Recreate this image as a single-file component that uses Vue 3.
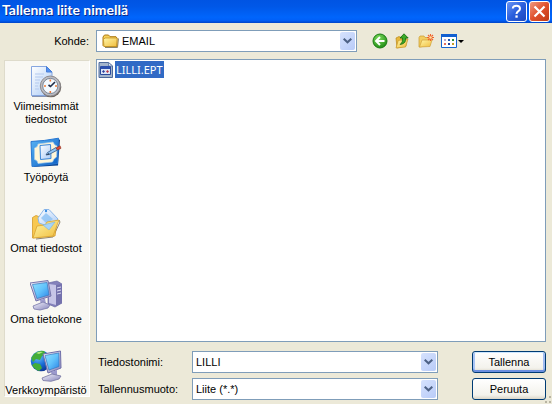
<script setup>
import { ref } from 'vue'

const folder = ref('EMAIL')
const fileName = ref('LILLI')
const fileType = ref('Liite (*.*)')
const places = [
  { id: 'recent', label: 'Viimeisimmät tiedostot' },
  { id: 'desktop', label: 'Työpöytä' },
  { id: 'documents', label: 'Omat tiedostot' },
  { id: 'computer', label: 'Oma tietokone' },
  { id: 'network', label: 'Verkkoympäristö' },
]
</script>

<template>
  <main class="dialog">
    <svg class="defs" width="0" height="0" aria-hidden="true">
      <defs>
        <linearGradient id="screen" x1="0" y1="0" x2="1" y2="1">
          <stop offset="0" stop-color="#8fe0ff" /><stop offset="0.5" stop-color="#62c3fb" /><stop offset="1" stop-color="#2c86e8" />
        </linearGradient>
        <linearGradient id="metal" x1="0" y1="0" x2="1" y2="1">
          <stop offset="0" stop-color="#f4f4fc" /><stop offset="1" stop-color="#8583bb" />
        </linearGradient>
        <linearGradient id="yellow" x1="0" y1="0" x2="1" y2="1">
          <stop offset="0" stop-color="#fff6a8" /><stop offset="1" stop-color="#f0bd3c" />
        </linearGradient>
        <linearGradient id="blue" x1="0" y1="0" x2="1" y2="1">
          <stop offset="0" stop-color="#5ab4f4" /><stop offset="1" stop-color="#0b5fc4" />
        </linearGradient>
        <linearGradient id="paper" x1="0" y1="0" x2="1" y2="1">
          <stop offset="0" stop-color="#ffffff" /><stop offset="1" stop-color="#a9caf6" />
        </linearGradient>
        <radialGradient id="globe" cx="0.35" cy="0.3" r="0.8">
          <stop offset="0" stop-color="#6cc4fa" /><stop offset="0.5" stop-color="#1a6ed8" /><stop offset="1" stop-color="#0a2c88" />
        </radialGradient>
        <radialGradient id="green" cx="0.4" cy="0.3" r="0.75">
          <stop offset="0" stop-color="#7fdc5c" /><stop offset="1" stop-color="#1c8a12" />
        </radialGradient>
      </defs>
    </svg>

    <header class="title-bar">
      <h1>Tallenna liite nimellä</h1>
      <button class="caption help" aria-label="Ohje">
        <svg width="19" height="19" viewBox="0 0 19 19"><path d="M5.8 6.6C5.8 2.7 13 2.7 13 6.7C13 9.2 9.5 9 9.5 12" fill="none" stroke="#fff" stroke-width="2" /><path d="M8.4 13.4h2.3v2.3H8.4z" fill="#fff" /></svg>
      </button>
      <button class="caption close" aria-label="Sulje">
        <svg width="19" height="19" viewBox="0 0 19 19"><path d="M4.5 4.5L14.5 14.5M14.5 4.5L4.5 14.5" stroke="#fff" stroke-width="2.2" /></svg>
      </button>
    </header>

    <div class="toolbar">
      <label class="look-label" for="folder">Kohde:</label>
      <div class="combo look">
        <svg class="folder-icon" width="17" height="16" viewBox="0 0 17 16"><path d="M3 14.5h12.5l1-9" fill="none" stroke="#8a846c" /><path d="M1 12.5V4L2.5 2h4L8 3.7h6l1 1.5v8.3H2z" fill="#f4cf58" stroke="#ad7b16" /><path d="M1.5 6.5L3 5h12.2l-.7 8.5H2z" fill="url(#yellow)" stroke="#c08c1c" stroke-width=".7" /></svg>
        <select id="folder" v-model="folder" class="with-icon"><option>EMAIL</option></select>
        <span class="arrow"><svg width="9" height="6" viewBox="0 0 9 6"><path d="M.7 .7L4.5 4.3L8.3 .7" fill="none" stroke="#4d6185" stroke-width="2" /></svg></span>
      </div>
      <nav class="tools">
        <button aria-label="Takaisin"><svg width="16" height="16" viewBox="0 0 16 16"><circle cx="8" cy="8" r="7" fill="url(#green)" stroke="#197c13" /><path d="M12.5 8H4.5M8 4L4 8L8 12" fill="none" stroke="#fff" stroke-width="1.9" /></svg></button>
        <button aria-label="Ylös"><svg width="16" height="16" viewBox="0 0 16 16"><path d="M1 5l3-1.5 2 1 5-1V13L2 15z" fill="#e8b83a" stroke="#b98818" stroke-width=".7" /><path d="M1 15L3.3 7.4L13 6L10.5 14z" fill="url(#yellow)" stroke="#c89625" stroke-width=".7" /><path d="M5.2 11.5Q8.2 9.5 7.5 5H5L9 .8L13.2 5H10.7Q11.4 10.5 5.2 11.5z" fill="#3aab28" stroke="#14680d" stroke-width=".8" /></svg></button>
        <button aria-label="Uusi kansio"><svg width="16" height="16" viewBox="0 0 16 16"><path d="M1 4.5L2 3h4l1 1.5h5V12L2 14H1z" fill="#f2cd60" stroke="#c99b30" stroke-width=".7" /><path d="M1.5 14L4 7h10l-2 6.5z" fill="url(#yellow)" stroke="#d1a239" stroke-width=".7" /><path d="M12.5 1V8M9 4.5H16M10 2L15 7M15 2L10 7" stroke="#ef632e" stroke-width="1.1" /><circle cx="12.5" cy="4.5" r="1.3" fill="#ffe1a0" /></svg></button>
        <button class="views" aria-label="Näkymät"><svg width="23" height="16" viewBox="0 0 23 16"><path d="M.5 1.5h15v13H.5z" fill="#fff" stroke="#1665cf" /><path d="M0 1h16v3H0z" fill="#1260d0" /><path d="M3 6h2v2H3z" fill="#b4a4cc" /><path d="M7 6h2v2H7z" fill="#2357ae" /><path d="M11 6h2v2h-2z" fill="#28903d" /><path d="M3 10h2v2H3z" fill="#e5715c" /><path d="M7 10h2v2H7z" fill="#20419a" /><path d="M11 10h2v2h-2z" fill="#c79c24" /><path d="M17 7h6l-3 3z" fill="#000" /></svg></button>
      </nav>
    </div>

    <div class="body">
      <nav class="places">
        <button v-for="place in places" :key="place.id" class="place">
          <svg v-if="place.id === 'recent'" width="32" height="32" viewBox="0 0 32 32">
            <path d="M2 30.5h19" fill="none" stroke="#8794b0" /><path d="M1.5.5h15L22 6v23.5H1.5z" fill="url(#paper)" stroke="#86a6e0" /><path d="M16.5.5V6H22z" fill="#4f8ff0" stroke="#4a7fd8" />
            <path d="M5 8h9M5 11h8M5 14h5M5 17h4M5 20h3M5 23h4" stroke="#b4c9ee" /><circle cx="21" cy="21" r="10.3" fill="#6d6660" /><circle cx="20.3" cy="20" r="10" fill="#bcbcc2" stroke="#8e8c90" /><circle cx="20.3" cy="20" r="7.6" fill="#f4faff" stroke="#7c8898" />
            <path d="M20.3 13.5v2M20.3 25v2M14 20h2M25 20h2" stroke="#ef7a35" stroke-width="1.6" /><path d="M25 16L20.5 20.5L18.5 19" fill="none" stroke="#1e2c48" stroke-width="1.6" />
          </svg>
          <svg v-else-if="place.id === 'desktop'" width="32" height="32" viewBox="0 0 32 32">
            <path d="M3 30L28 28.5L30 3L28 1.5z" fill="#0c4795" /><path d="M1 4.5Q14 4 28.5 1.2L27.5 26.5L2 29.5z" fill="url(#blue)" stroke="#2a78d2" /><path d="M8 7L23 5Q24 8 27 9L26.5 20Q23 22 22.5 25L8 26.5Q7.5 23 4.5 22.5L4.5 11Q8 10 8 7z" fill="#fff6d8" stroke="#a9cdec" stroke-width=".7" />
            <path d="M10 8.5L20.5 7.5L21 21.5L10.5 22.5z" fill="url(#paper)" stroke="#3a86da" /><path d="M17.5 15.5L26 10.5L27.5 13L19 17.5L16 18z" fill="#90c5f5" stroke="#325888" stroke-width=".8" /><path d="M26 11L30 8.7L31 11.3L27.5 13z" fill="#db4931" stroke="#8d2a19" stroke-width=".6" /><path d="M16 18l3-2 .5 1.5z" fill="#26364d" />
          </svg>
          <svg v-else-if="place.id === 'documents'" width="32" height="32" viewBox="0 0 32 32">
            <path d="M6 31L23 29L30 14L29 12" fill="none" stroke="#8e8470" /><path d="M2.5 30V9.5L6 7.5L10 9L13 12L27 13L25 28z" fill="#f8c850" stroke="#d39a2a" stroke-width=".8" />
            <path d="M8 10L14 1.5L19 1.5L28 11L20 19L9 15z" fill="url(#paper)" stroke="#8db8ea" /><path d="M11 10L16 5L23 11L17 16z" fill="#8bc0f4" opacity=".8" /><circle cx="16" cy="3" r="1.2" fill="#398de1" />
            <path d="M3 30L7 18L15 17L17 14L29 12L23 28z" fill="url(#yellow)" stroke="#d8a534" stroke-width=".8" /><path d="M13 17L25 14L19 22z" fill="#a7d4f8" stroke="#77b3e4" stroke-width=".6" />
          </svg>
          <svg v-else-if="place.id === 'computer'" width="32" height="32" viewBox="0 0 32 32">
            <path d="M18 4L27 2L32 5V24L25 28L18 25z" fill="#8481bb" stroke="#6c6aa3" stroke-width=".7" /><path d="M19 5L26 6V26L19 24z" fill="#c7c5e7" /><path d="M26 6L32 5V24L26 27z" fill="#7572ad" /><path d="M27 9l4-1M27 12l4-1M27 15l4-1" stroke="#dedcf6" />
            <path d="M0 4L18 1.5L21 17L6 22z" fill="url(#metal)" stroke="#7776ad" /><path d="M2.5 5.5L17 3.5L19 16L7 19.5z" fill="url(#screen)" stroke="#3879be" stroke-width=".7" /><path d="M10 21L15 19.5L16 25L11 26z" fill="#9d9bcc" /><path d="M3 27L13 23L20 26L18 29L10 31L4 30z" fill="url(#metal)" stroke="#7777a9" stroke-width=".8" />
          </svg>
          <svg v-else width="32" height="32" viewBox="0 0 32 32">
            <circle cx="11" cy="11" r="10.3" fill="url(#globe)" /><path d="M4 4Q9 0 14 1L16 4L12 6L10 10L6 9L3 12L1.2 8zM5 13L10 14L12 18L9 21Q4 19 2 15z" fill="#43ad39" /><path d="M6 3Q10 1 13 2L9 4z" fill="#b5e981" />
            <path d="M13 4L30.5 1L31 18L18 23z" fill="url(#metal)" stroke="#706fa9" /><path d="M15 5.5L28.8 3L29 16.5L19 20z" fill="url(#screen)" stroke="#3479be" stroke-width=".7" /><path d="M21 22L27 20V26H22z" fill="#9b99cd" /><path d="M12 28L22 24L31 26L29 29L21 31.3L13 30.5z" fill="url(#metal)" stroke="#74739f" stroke-width=".8" />
          </svg>
          <span>{{ place.label }}</span>
        </button>
      </nav>

      <div class="content">
        <section class="files" aria-label="Tiedostot">
          <button class="file">
            <svg width="16" height="16" viewBox="0 0 16 16"><path d="M1 .5h9.5L14.5 4v11.500H1z" fill="#a3b4cc" stroke="#4d6a9c" /><path d="M10.5.5V4h4z" fill="#e3ecf8" stroke="#4d6a9c" stroke-width=".7" /><path d="M2.5 4.5h10v8h-10z" fill="#dce6f8" stroke="#2a4a9c" /><path d="M3 4h9v3H3z" fill="#2c50ae" /><path d="M4 9.5L5.5 8L7 9.5L5.5 11z" fill="#2c3f9b" /><path d="M8 9.5L9.5 8L11 9.5L9.5 11z" fill="#b8384a" /></svg>
            <span>LILLI.EPT</span>
          </button>
        </section>

        <form class="fields" @submit.prevent>
          <label for="name">Tiedostonimi:</label>
          <div class="combo">
            <input id="name" v-model="fileName" type="text" />
            <span class="arrow"><svg width="9" height="6" viewBox="0 0 9 6"><path d="M.7 .7L4.5 4.3L8.3 .7" fill="none" stroke="#4d6185" stroke-width="2" /></svg></span>
          </div>
          <button class="action primary" type="submit">Tallenna</button>
          <label for="type">Tallennusmuoto:</label>
          <div class="combo">
            <select id="type" v-model="fileType"><option>Liite (*.*)</option></select>
            <span class="arrow"><svg width="9" height="6" viewBox="0 0 9 6"><path d="M.7 .7L4.5 4.3L8.3 .7" fill="none" stroke="#4d6185" stroke-width="2" /></svg></span>
          </div>
          <button class="action" type="button">Peruuta</button>
        </form>
      </div>
    </div>
    <svg class="grip" width="8" height="8" viewBox="0 0 8 8" aria-hidden="true"><path d="M5 0h2v2H5zM1 5h2v2H1zM5 5h2v2H5z" fill="#b8b4a2" /></svg>
  </main>
</template>

<style>
body { margin: 0; background: #ece9d8; }
</style>

<style scoped>
* { box-sizing: border-box; }
.dialog {
  position: relative;
  display: flex;
  flex-direction: column;
  min-height: 100vh;
  background: #ece9d8;
  color: #000;
  font: 11px/13px "Liberation Sans", sans-serif;
}
button, input, select { font: inherit; color: inherit; margin: 0; padding: 0; }
button { border: 0; background: none; }
svg { display: block; flex: none; }
.defs { position: absolute; }
.title-bar {
  display: flex;
  align-items: center;
  gap: 2px;
  height: 23px;
  padding: 0 2px;
  background: linear-gradient(#0054e3 0, #0058e8 30%, #0065fc 75%, #0060f8 88%, #0045c8 100%);
}
h1 {
  flex: 1;
  margin: 0;
  padding-bottom: 4px;
  color: #fff;
  font: bold 14px/18px Lato, "Open Sans", sans-serif;
  text-shadow: 1px 1px #0a2a8c;
}
.caption {
  display: grid;
  place-items: center;
  width: 21px;
  height: 21px;
  border: 1px solid #fff;
  border-radius: 3px;
}
.help { background: linear-gradient(135deg, #6a96f4, #2a5fdd 50%, #1c48bd); }
.close { background: linear-gradient(135deg, #f09a80, #e0502c 50%, #c03a14); }
.toolbar { display: flex; align-items: center; padding: 7px 6px 7px 0; }
.look-label { width: 96px; padding-right: 7px; text-align: right; }
.combo {
  position: relative;
  display: flex;
  height: 22px;
  padding: 1px;
  border: 1px solid #7f9db9;
  background: #fff;
}
.look { width: 261px; }
.combo input, .combo select {
  flex: 1;
  min-width: 0;
  padding: 0 20px 0 2px;
  border: 0;
  outline: 0;
  appearance: none;
  background: none;
}
.combo .with-icon { padding-left: 24px; }
.folder-icon { position: absolute; left: 5px; top: 2px; }
.arrow {
  position: absolute;
  top: 1px;
  right: 1px;
  bottom: 1px;
  display: grid;
  place-items: center;
  width: 15px;
  border-radius: 2px;
  background: linear-gradient(135deg, #d6e2fd, #b8cbf8);
  pointer-events: none;
}
.tools { display: flex; gap: 7px; margin-left: 15px; }
.body { display: flex; flex: 1; gap: 6px; padding: 0 6px 4px 4px; }
.places {
  display: flex;
  flex: none;
  flex-direction: column;
  align-self: flex-start;
  width: 86px;
  margin-top: 1px;
  padding: 5px 2px 0 0;
  border: 1px solid;
  border-color: #dedbcb #fff #fff #dedbcb;
  background: #f9f8f3;
}
.place {
  display: flex;
  flex-direction: column;
  align-items: center;
  gap: 2px;
  height: 71px;
}
.place:last-child { height: 46px; }
.place:first-child span { width: 68px; }
.content { display: flex; flex: 1; flex-direction: column; min-width: 0; }
.files { flex: 1; padding: 1px; border: 1px solid #7f9db9; background: #fff; }
.file { display: flex; align-items: center; gap: 1px; }
.file span {
  padding: 2px 1px;
  background: #316ac5;
  color: #fff;
  font: 11px/13px "Noto Sans", sans-serif;
}
.fields {
  display: grid;
  grid-template-columns: 94px minmax(0, 246px) minmax(74px, 1fr);
  align-items: center;
  row-gap: 5px;
  padding: 9px 0 0 2px;
}
.action {
  justify-self: end;
  width: 74px;
  height: 22px;
  border: 1px solid #003c74;
  border-radius: 3px;
  background: linear-gradient(#fff, #f3f2ec 80%, #dbd6c8);
}
.primary { box-shadow: inset 0 1px #cee7ff, inset 0 -2px #6b8fe0, inset 2px 0 #a9c4f5, inset -2px 0 #a0bbf0; }
.grip { position: absolute; right: 0; bottom: 0; }
</style>
